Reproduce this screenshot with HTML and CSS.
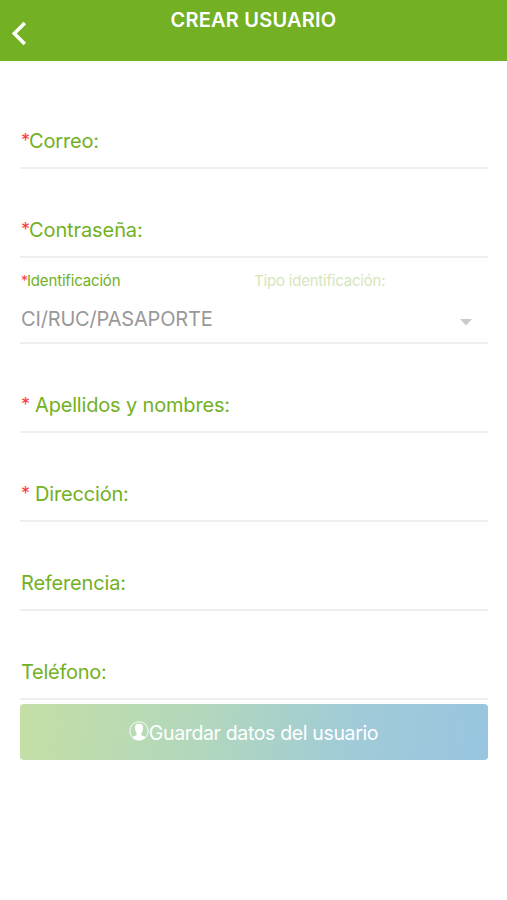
FILE: index.html
```html
<!DOCTYPE html>
<html lang="es">
<head>
<meta charset="utf-8">
<title>Crear usuario</title>
<link rel="stylesheet" href="styles.css">
</head>
<body>
<header class="bar">
  <svg class="back" width="16" height="26" viewBox="0 0 16 26"><path d="M13.800 3 3.300 13.500 13.800 24" fill="none" stroke="#fff" stroke-width="3.600"/></svg>
  <h1 class="title">CREAR USUARIO</h1>
</header>
<main class="form">
  <div class="field first"><label><span class="req">*</span><span class="t correo">Correo:</span></label></div>
  <div class="field"><label><span class="req">*</span><span class="t contra">Contraseña:</span></label></div>
  <div class="select">
    <div class="captions"><span class="cap"><span class="req">*</span><span class="t ident">Identificación</span></span><span class="cap faded"><span class="t tipo">Tipo identificación:</span></span></div>
    <div class="value"><span class="t ci">CI/RUC/PASAPORTE</span><svg class="arrow" width="12" height="7" viewBox="0 0 12 7"><path d="M0 0h12L6 6.500z" fill="#cacaca"/></svg></div>
  </div>
  <div class="field"><label><span class="req wide">*</span><span class="t apellidos">Apellidos y nombres:</span></label></div>
  <div class="field"><label><span class="req wide">*</span><span class="t direccion">Dirección:</span></label></div>
  <div class="field"><label><span class="t referencia">Referencia:</span></label></div>
  <div class="field"><label><span class="t telefono">Teléfono:</span></label></div>
  <button class="save" type="button">
    <svg class="person" width="20" height="20" viewBox="0 0 20 20"><circle cx="10" cy="10" r="9.200" fill="none" stroke="#fff" stroke-width=".9"/><path d="M10 2.800c-3.200 0-4.300 1.700-4 4.400.1 2.300.8 3.700 1.600 4.700v2c-.4.900-3 1.200-4.300 2.300C5 18.300 7.300 19.200 10 19.200s5-.9 6.700-3c-1.300-1.100-3.900-1.400-4.300-2.300v-2c.8-1 1.500-2.400 1.600-4.700.3-2.700-.8-4.400-4-4.400z" fill="#fff"/></svg><span class="t guardar">Guardar datos del usuario</span>
  </button>
</main>
</body>
</html>
```
FILE: styles.css
```css
* { box-sizing: border-box; }
body { margin: 0; background: #fff; font-family: Inter, "Liberation Sans", sans-serif; color: #72b123; }
.bar { height: 60.500px; background: #73b023; display: grid; grid-template-columns: 60px 1fr 60px; }
.back { margin: 20px 0 0 11px; }
.title { margin: 8px 0 0; text-align: center; color: #fff; font-size: 20px; line-height: 24px; font-weight: 600; letter-spacing: 0.220px; white-space: nowrap; }
.form { padding: 18.500px 19px 0 20px; }
.field { height: 89px; border-bottom: 2px solid #eee; padding: 49px 0 0 1px; }
.field.first { height: 90px; padding-top: 50px; }
label { display: flex; font-size: 20px; line-height: 24px; letter-spacing: -0.170px; }
.t { white-space: nowrap; }
.req { color: #fa3b45; width: 8px; flex: none; font-size: 18px; }
.req.wide { width: 14px; }
.select { height: 86px; border-bottom: 2px solid #eee; padding: 13px 0 0 1px; }
.captions { display: grid; grid-template-columns: 233px 1fr; font-size: 15px; line-height: 20px; }
.cap { display: flex; }
.cap .req { width: 6px; font-size: 14px; }
.faded { color: #d5e6bb; }
.value { display: flex; align-items: center; justify-content: space-between; margin-top: 15px; padding-right: 16px; font-size: 20px; line-height: 26px; color: #999; }
.arrow { margin-top: 6px; }
.save { display: flex; align-items: center; justify-content: center; width: 100%; height: 56px; margin-top: 4px; padding: 1px 1px 0 0; border: 0; border-radius: 4px; background: linear-gradient(100deg, #c5dfa5, #b1d7bd 40%, #a1cbd7 70%, #98c5e0); color: #fff; font: 20px/24px Inter, "Liberation Sans", sans-serif; }
.person { margin-bottom: 3px; }
.contra { letter-spacing: -0.100px; }
.telefono { letter-spacing: -0.280px; }
.ident { letter-spacing: -0.170px; }
.tipo { letter-spacing: -0.200px; }
.ci { letter-spacing: -0.170px; }
.guardar { font-size: 19.500px; letter-spacing: -0.350px; }
```
